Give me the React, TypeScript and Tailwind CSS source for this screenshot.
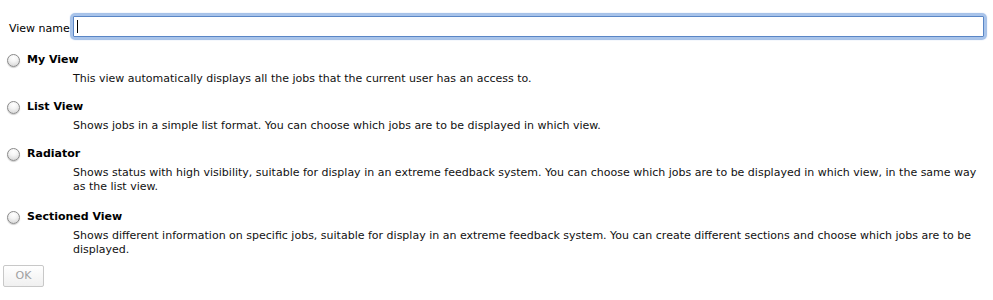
import React from "react";

const font = { fontFamily: '"DejaVu Sans", Verdana, sans-serif' };

function Radio() {
  return (
    <div className="w-[13px] h-[13px] rounded-full border border-[#8a8a8a] bg-[radial-gradient(circle_at_50%_25%,#ffffff_0%,#f4f4f4_40%,#cfcfcf_100%)] shadow-[0_1px_1px_rgba(0,0,0,0.2)] shrink-0" />
  );
}

function Option({ title, desc, mb }: { title: string; desc: string; mb: string }) {
  return (
    <div className={mb}>
      <div className="flex items-center h-[14px] pl-[7px]">
        <Radio />
        <span className="ml-[7px] font-bold leading-[14px] text-black">{title}</span>
      </div>
      <div className="pl-[73px] pr-[6px] mt-[5px] leading-[14px] text-[#111]">{desc}</div>
    </div>
  );
}

export default function App() {
  return (
    <div className="w-[993px] h-[300px] bg-white text-[11px] text-black overflow-hidden" style={font}>
      <div className="flex items-center pt-[14px] pl-[9px] pr-[7px]">
        <span className="leading-[14px] mt-[4px] w-[62px]">View name</span>
        <div className="flex-1 h-[25px] rounded-[4px] bg-[#a9c4ea] p-[2px] shadow-[0_0_1px_1px_rgba(93,143,214,0.6)]">
          <div className="h-full bg-white border border-[#5a86c6] rounded-[1px] flex items-center pl-[3px]">
            <div className="w-[1px] h-[13px] bg-black" />
          </div>
        </div>
      </div>
      <div className="mt-[14px]">
        <Option
          title="My View"
          desc="This view automatically displays all the jobs that the current user has an access to."
          mb="mb-[14px]"
        />
        <Option
          title="List View"
          desc="Shows jobs in a simple list format. You can choose which jobs are to be displayed in which view."
          mb="mb-[14px]"
        />
        <Option
          title="Radiator"
          desc="Shows status with high visibility, suitable for display in an extreme feedback system. You can choose which jobs are to be displayed in which view, in the same way as the list view."
          mb="mb-[16px]"
        />
        <Option
          title="Sectioned View"
          desc="Shows different information on specific jobs, suitable for display in an extreme feedback system. You can create different sections and choose which jobs are to be displayed."
          mb="mb-[8px]"
        />
      </div>
      <div className="pl-[3px]">
        <button className="w-[41px] h-[22px] border border-[#c8c8c8] rounded-[2px] bg-[linear-gradient(#ffffff,#f0f0f0)] text-[#a0a0a0] text-[11px] leading-[20px]" style={font}>
          OK
        </button>
      </div>
    </div>
  );
}
